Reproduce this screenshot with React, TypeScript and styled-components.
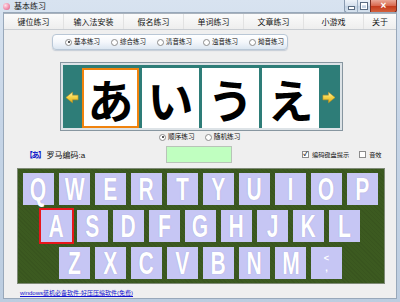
import styled, { createGlobalStyle } from 'styled-components';

const GlobalStyle = createGlobalStyle`
  html, body {
    margin: 0;
    padding: 0;
  }

  body {
    width: 400px;
    height: 302px;
    overflow: hidden;
    font-family: "Liberation Sans", "Noto Sans CJK SC", sans-serif;
  }
`;

const MENU = ['键位练习', '输入法安装', '假名练习', '单词练习', '文章练习', '小游戏', '关于'];
const MODES = ['基本练习', '综合练习', '清音练习', '浊音练习', '拗音练习'];
const KANA = ['あ', 'い', 'う', 'え'];
const ROWS = [
  { indent: 5, keys: ['Q', 'W', 'E', 'R', 'T', 'Y', 'U', 'I', 'O', 'P'] },
  { indent: 23, keys: ['A', 'S', 'D', 'F', 'G', 'H', 'J', 'K', 'L'] },
  { indent: 41, keys: ['Z', 'X', 'C', 'V', 'B', 'N', 'M', '<'] },
];

const Arrow = ({ dir }: { dir: 'left' | 'right' }) => (
  <svg width="15" height="13" viewBox="0 0 15 13" style={dir === 'left' ? { transform: 'scaleX(-1)' } : undefined}>
    <defs>
      <linearGradient id={`ag-${dir}`} x1="0" y1="0" x2="0" y2="1">
        <stop offset="0" stopColor="#fff6c0" />
        <stop offset="0.45" stopColor="#f7d64a" />
        <stop offset="1" stopColor="#e0a81c" />
      </linearGradient>
    </defs>
    <path d="M1 4 H7 V0.8 L14 6.5 L7 12.2 V9 H1 Z" fill={`url(#ag-${dir})`} stroke="#c8961a" strokeWidth="0.6" />
  </svg>
);

const App = () => {
  return (
    <>
      <GlobalStyle />
      <Window>
        <TitleBar>
          <AppIcon />
          <Title>基本练习</Title>
          <Captions>
            <CaptionGroup>
              <CaptionBtn>
                <MinGlyph />
              </CaptionBtn>
              <CaptionBtn>
                <MaxGlyph />
              </CaptionBtn>
            </CaptionGroup>
            <CloseBtn>×</CloseBtn>
          </Captions>
        </TitleBar>

        <Client>
          <MenuBar>
            {MENU.map((m, i) => (
              <MenuItem key={m} $last={i === MENU.length - 1}>
                {m}
              </MenuItem>
            ))}
          </MenuBar>

          <ModeBox>
            {MODES.map((m, i) => (
              <Choice key={m} $gap={i === 0 ? 0 : 11}>
                <Radio $on={i === 0} />
                {m}
              </Choice>
            ))}
          </ModeBox>

          <KanaPanel>
            <Arrow dir="left" />
            <Cards>
              {KANA.map((k, i) => (
                <KanaCard key={k} $active={i === 0}>
                  {k}
                </KanaCard>
              ))}
            </Cards>
            <Arrow dir="right" />
          </KanaPanel>

          <OrderRow>
            <Choice $gap={0}>
              <Radio $on />
              顺序练习
            </Choice>
            <Choice $gap={10}>
              <Radio />
              随机练习
            </Choice>
          </OrderRow>

          <InfoRow>
            <RomajiLabel>
              <b>【あ】</b>罗马编码:a
            </RomajiLabel>
            <InputBox />
            <Check $gap={70}>
              <CheckBox $on />
              编码键盘提示
            </Check>
            <Check $gap={10}>
              <CheckBox />
              音效
            </Check>
          </InfoRow>

          <Keyboard>
            {ROWS.map((row) => (
              <KeyRow key={row.keys[0]} $indent={row.indent}>
                {row.keys.map((k) => (
                  <Key key={k} $active={k === 'A'}>
                    {k === '<' ? (
                      <SmallKey>
                        <span>&lt;</span>
                        <span>,</span>
                      </SmallKey>
                    ) : (
                      <KeyLetter>{k}</KeyLetter>
                    )}
                  </Key>
                ))}
              </KeyRow>
            ))}
          </Keyboard>

          <Footer>
            <FooterLink href="#">windows装机必备软件-好压压缩软件(免费)</FooterLink>
          </Footer>
        </Client>
      </Window>
    </>
  );
};

export default App;

const Window = styled.div`
  display: flex;
  flex-direction: column;

  width: 400px;
  height: 302px;
  background: linear-gradient(180deg, #d8e3f0 0%, #c6d5e7 40%, #bccde0 100%);
`;

const TitleBar = styled.div`
  display: flex;
  align-items: flex-start;

  height: 13px;
  padding-left: 3px;
`;

const AppIcon = styled.div`
  width: 7px;
  height: 7px;
  margin-top: 3px;
  border-radius: 50%;
  background: radial-gradient(circle at 35% 35%, #ffe0ea 0%, #f08aa8 60%, #c85078 100%);
`;

const Title = styled.span`
  margin: 2px 0 0 4px;

  font-size: 8px;
  line-height: 9px;
  color: #1a1a1a;
`;

const Captions = styled.div`
  display: flex;

  margin-left: auto;
  margin-right: 3px;
`;

const CaptionGroup = styled.div`
  display: flex;

  height: 12px;
  border: 1px solid #8a9bb0;
  border-top: none;
  border-right: none;
  border-radius: 0 0 0 3px;
  background: linear-gradient(180deg, #eef3f9 0%, #d4dfec 50%, #c2d1e2 51%, #d6e2ee 100%);
`;

const CaptionBtn = styled.div`
  display: flex;
  align-items: center;
  justify-content: center;

  width: 12px;

  & + & {
    border-left: 1px solid #9eb0c4;
  }
`;

const MinGlyph = styled.div`
  width: 5px;
  height: 2px;
  margin-top: 3px;
  background: #fff;
  box-shadow: 0 0 0 1px #5a6c82;
`;

const MaxGlyph = styled.div`
  width: 4px;
  height: 3px;
  border: 1px solid #fff;
  border-top-width: 2px;
  box-shadow: 0 0 0 1px #5a6c82;
`;

const CloseBtn = styled.div`
  display: flex;
  align-items: center;
  justify-content: center;

  width: 25px;
  height: 12px;
  border: 1px solid #7a2c20;
  border-top: none;
  border-radius: 0 0 3px 0;
  background: linear-gradient(180deg, #eaa898 0%, #d8664c 50%, #c43a1c 51%, #d4603c 100%);

  font-size: 10px;
  font-weight: bold;
  line-height: 1;
  color: #fff;
`;

const Client = styled.div`
  display: flex;
  flex-direction: column;

  flex: 1;
  margin: 0 4px 4px;
  background: #efefef;
  box-shadow: 0 0 0 1px #98a8ba;
`;

const MenuBar = styled.div`
  display: flex;

  height: 17px;
  box-sizing: border-box;
  border-top: 1px solid #a9b2bd;
  border-bottom: 1px solid #c9cdd2;
  background: linear-gradient(180deg, #fbfbfb 0%, #eeeeee 100%);
`;

const MenuItem = styled.div<{ $last?: boolean }>`
  display: flex;
  align-items: center;
  justify-content: center;

  ${({ $last }) => ($last ? 'flex: 1;' : 'width: 60px;')}
  border-right: ${({ $last }) => ($last ? 'none' : '1px solid #e2e2e2')};
  box-sizing: border-box;

  font-size: 8px;
  color: #111;
`;

const ModeBox = styled.div`
  display: flex;
  align-items: center;

  width: 236px;
  height: 16px;
  box-sizing: border-box;
  margin: 4px 0 0 48px;
  padding-left: 12px;
  border: 1px solid #b9c7d6;
  border-radius: 4px;
  background: linear-gradient(180deg, #ffffff 0%, #f4f7fb 50%, #dce6f1 100%);
  box-shadow: 0 1px 1px rgba(120, 140, 170, 0.35);
`;

const Choice = styled.label<{ $gap: number }>`
  display: flex;
  align-items: center;
  gap: 2px;

  margin-left: ${({ $gap }) => $gap}px;

  font-size: 6.5px;
  line-height: 8px;
  color: #111;
  white-space: nowrap;
`;

const Radio = styled.span<{ $on?: boolean }>`
  position: relative;

  width: 5px;
  height: 5px;
  border: 1px solid #8c8c8c;
  border-radius: 50%;
  background: #fff;

  &::after {
    content: '';
    position: absolute;
    inset: 1.5px;
    border-radius: 50%;
    background: ${({ $on }) => ($on ? '#222' : 'transparent')};
  }
`;

const KanaPanel = styled.div`
  display: flex;
  align-items: center;

  width: 283px;
  height: 69px;
  box-sizing: border-box;
  margin: 12px 0 0 56px;
  padding: 2px 6px 0 4px;
  border: 1px solid #8796a0;
  background: #2e7d78;
  box-shadow: inset 0 0 0 2px #dde3e7;
`;

const Cards = styled.div`
  display: flex;
  gap: 3px;

  margin: 0 3px;
`;

const KanaCard = styled.div<{ $active?: boolean }>`
  display: flex;
  align-items: center;
  justify-content: center;

  width: 57px;
  height: 60px;
  box-sizing: border-box;
  border: 2px solid ${({ $active }) => ($active ? '#f0830e' : '#ffffff')};
  background: #fff;

  font-family: "Noto Sans CJK JP", sans-serif;
  font-size: 46px;
  font-weight: 700;
  line-height: 1;
  color: #000;
`;

const OrderRow = styled.div`
  display: flex;
  align-items: center;

  height: 10px;
  margin: 1px 0 0 155px;

  ${Choice} {
    font-size: 6.7px;
  }
`;

const InfoRow = styled.div`
  display: flex;
  align-items: center;

  height: 18px;
  margin-top: 3px;
  padding-left: 21px;
`;

const RomajiLabel = styled.span`
  width: 141px;

  font-size: 8px;
  color: #111;

  b {
    font-weight: bold;
    color: #1020c8;
    letter-spacing: -1.5px;
    margin-right: 2px;
  }
`;

const InputBox = styled.div`
  width: 66px;
  height: 17px;
  box-sizing: border-box;
  border: 1px solid #b8c4b8;
  background: #c0ffc0;
`;

const Check = styled.label<{ $gap: number }>`
  display: flex;
  align-items: center;
  gap: 3px;

  margin-left: ${({ $gap }) => $gap}px;

  font-size: 6.2px;
  color: #111;
  white-space: nowrap;
`;

const CheckBox = styled.span<{ $on?: boolean }>`
  display: flex;
  align-items: center;
  justify-content: center;

  width: 5px;
  height: 5px;
  border: 1px solid #8c8c8c;
  background: #fff;

  &::after {
    content: '${({ $on }) => ($on ? '✓' : '')}';
    font-size: 6px;
    line-height: 1;
    font-weight: bold;
    color: #222;
  }
`;

const Keyboard = styled.div`
  display: flex;
  flex-direction: column;
  gap: 5px;

  width: 368px;
  height: 116px;
  box-sizing: border-box;
  margin: 5px 0 0 13px;
  padding-top: 4px;
  border: 1px solid #7e8a76;
  background:
    repeating-linear-gradient(45deg, rgba(0, 0, 0, 0.05) 0 1px, transparent 1px 3px),
    #3c5a20;
`;

const KeyRow = styled.div<{ $indent: number }>`
  display: flex;
  gap: 5px;

  padding-left: ${({ $indent }) => $indent}px;
`;

const Key = styled.div<{ $active?: boolean }>`
  display: flex;
  align-items: center;
  justify-content: center;

  width: 31px;
  height: 32px;
  background: #c6c6f4;
  outline: ${({ $active }) => ($active ? '2px solid #e8161c' : 'none')};

  color: #fff;
`;

const KeyLetter = styled.span`
  display: inline-block;
  transform: scaleX(0.68);

  font-family: "Liberation Sans", sans-serif;
  font-size: 31px;
  font-weight: bold;
  line-height: 1;
  text-shadow: 0 0 1px rgba(120, 120, 180, 0.6);
`;

const SmallKey = styled.span`
  display: flex;
  flex-direction: column;
  align-items: center;

  font-size: 9px;
  font-weight: bold;
  line-height: 10px;
`;

const Footer = styled.div`
  display: flex;
  align-items: center;

  height: 9px;
  margin: 5px 0 0 16px;

  font-size: 6px;
  line-height: 9px;
`;

const FooterLink = styled.a`
  font-size: 6px;
  line-height: 9px;
  color: #1010d0;
  text-decoration: underline;
`;
